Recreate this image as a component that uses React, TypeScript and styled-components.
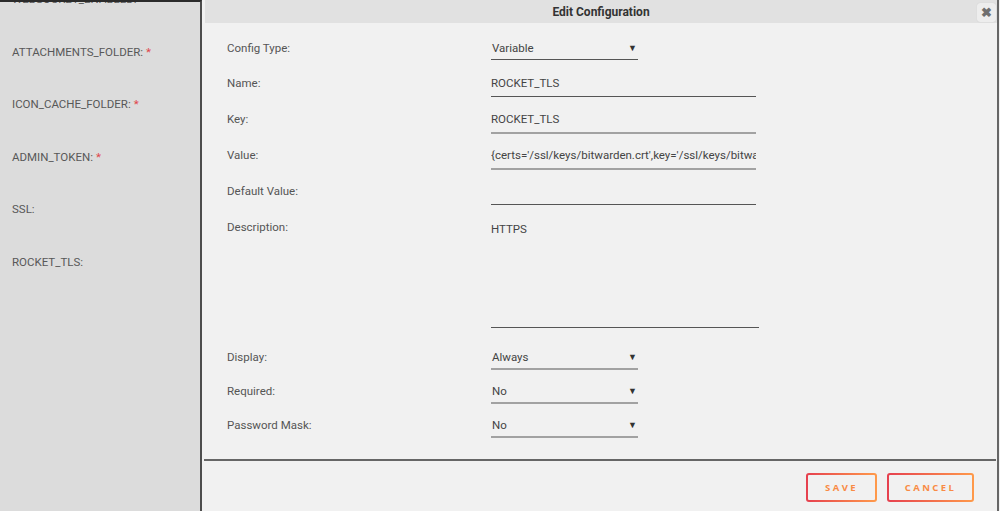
import React from "react";
import styled, { createGlobalStyle } from "styled-components";

const Global = createGlobalStyle`
  html, body { margin: 0; padding: 0; background: #f1f1f1; overflow: hidden; }
  body { font-family: Roboto, "Noto Sans", sans-serif; }
  * { box-sizing: border-box; }
`;

const Page = styled.div`
  display: flex;
  width: 1000px;
  height: 511px;
  overflow: hidden;
`;

const Sidebar = styled.div`
  width: 202px;
  flex: none;
  background: #dcdcdc;
  border-top: 2px solid #2b2b2b;
  border-right: 2px solid #4d4d4d;
  overflow: hidden;
`;

const SideList = styled.div`
  margin-top: -29px;
  padding-left: 12px;
`;

const SideItem = styled.div`
  height: 52.5px;
  display: flex;
  align-items: center;
  font-size: 11.5px;
  color: #585858;
`;

const Star = styled.span`
  color: #e0454b;
  margin-left: 3px;
`;

const Dialog = styled.div`
  flex: 1;
  display: flex;
  flex-direction: column;
  background: #f1f1f1;
  padding-left: 1px;
  border-right: 2px solid #666;
  margin-right: 1px;
`;

const Header = styled.div`
  height: 23px;
  background: #e1e1e1;
  margin: 0 0 0 2px;
  display: flex;
  align-items: center;
  justify-content: center;
  position: relative;
  font-size: 12px;
  font-weight: 700;
  color: #333;
`;

const Close = styled.div`
  position: absolute;
  right: 1px;
  top: 3px;
  width: 19px;
  height: 19px;
  border-radius: 3px;
  background: #ededed;
  box-shadow: 0 0 1px rgba(0, 0, 0, 0.15);
  display: flex;
  align-items: center;
  justify-content: center;
  color: #6f6f6f;
  font-size: 13px;
  font-weight: 700;
`;

const Body = styled.div`
  height: 436px;
  padding: 16px 0 0 24px;
  display: flex;
  flex-direction: column;
`;

const Row = styled.div<{ $mt: number }>`
  display: grid;
  grid-template-columns: 264px auto;
  align-items: start;
  margin-top: ${(p) => p.$mt}px;
`;

const Label = styled.div`
  font-size: 11.5px;
  line-height: 18px;
  color: #555;
`;

const Field = styled.div<{ $w: number; $line: string }>`
  width: ${(p) => p.$w}px;
  font-size: 11.5px;
  line-height: 18px;
  color: #444;
  padding-bottom: 4px;
  border-bottom: ${(p) => p.$line};
  white-space: nowrap;
  overflow: hidden;
`;

const Area = styled(Field)<{ $h: number }>`
  height: ${(p) => p.$h}px;
  padding-top: 2px;
`;

const Select = styled.div<{ $line: string }>`
  width: 147px;
  display: flex;
  align-items: center;
  justify-content: space-between;
  font-size: 11.5px;
  line-height: 18px;
  color: #444;
  padding: 0 0 2px 1px;
  border-bottom: ${(p) => p.$line};
`;

const Arrow = styled.span`
  font-size: 9px;
  color: #333;
  margin-right: 1px;
`;

const Footer = styled.div`
  border-top: 2px solid #666;
  margin-left: 1px;
  margin-right: 1px;
  display: flex;
  justify-content: flex-end;
  gap: 10px;
  padding: 12px 22px 0 0;
`;

const Button = styled.div<{ $w: number }>`
  width: ${(p) => p.$w}px;
  height: 29px;
  border-radius: 3px;
  border: 2px solid transparent;
  background: linear-gradient(#f1f1f1, #f1f1f1) padding-box,
    linear-gradient(90deg, #e6404f, #ff9a4a) border-box;
  display: flex;
  align-items: center;
  justify-content: center;
  font-family: "Open Sans", sans-serif;
  font-size: 9.5px;
  font-weight: 700;
  letter-spacing: 2.4px;
  color: #f98b45;
`;

const DARK = "1px solid #555";
const LIGHT = "2px solid #a2a2a2";

export default function App() {
  const side: [string, boolean][] = [
    ["WEBSOCKET_ENABLED:", false],
    ["ATTACHMENTS_FOLDER:", true],
    ["ICON_CACHE_FOLDER:", true],
    ["ADMIN_TOKEN:", true],
    ["SSL:", false],
    ["ROCKET_TLS:", false],
  ];
  return (
    <>
      <Global />
      <Page>
        <Sidebar>
          <SideList>
            {side.map(([t, req]) => (
              <SideItem key={t}>
                {t}
                {req && <Star>*</Star>}
              </SideItem>
            ))}
          </SideList>
        </Sidebar>
        <Dialog>
          <Header>
            Edit Configuration
            <Close>✖</Close>
          </Header>
          <Body>
            <Row $mt={0}>
              <Label>Config Type:</Label>
              <Select $line={DARK}>
                Variable<Arrow>▼</Arrow>
              </Select>
            </Row>
            <Row $mt={14}>
              <Label>Name:</Label>
              <Field $w={265} $line={DARK}>ROCKET_TLS</Field>
            </Row>
            <Row $mt={13}>
              <Label>Key:</Label>
              <Field $w={265} $line={LIGHT}>ROCKET_TLS</Field>
            </Row>
            <Row $mt={12}>
              <Label>Value:</Label>
              <Field $w={265} $line={LIGHT}>
                {"{certs='/ssl/keys/bitwarden.crt',key='/ssl/keys/bitwarden.key'}"}
              </Field>
            </Row>
            <Row $mt={12}>
              <Label>Default Value:</Label>
              <Field $w={265} $line={DARK}>&nbsp;</Field>
            </Row>
            <Row $mt={13}>
              <Label>Description:</Label>
              <Area $w={268} $h={110} $line={DARK}>HTTPS</Area>
            </Row>
            <Row $mt={20}>
              <Label>Display:</Label>
              <Select $line={LIGHT}>
                Always<Arrow>▼</Arrow>
              </Select>
            </Row>
            <Row $mt={12}>
              <Label>Required:</Label>
              <Select $line={LIGHT}>
                No<Arrow>▼</Arrow>
              </Select>
            </Row>
            <Row $mt={12}>
              <Label>Password Mask:</Label>
              <Select $line={LIGHT}>
                No<Arrow>▼</Arrow>
              </Select>
            </Row>
          </Body>
          <Footer>
            <Button $w={71}>SAVE</Button>
            <Button $w={87}>CANCEL</Button>
          </Footer>
        </Dialog>
      </Page>
    </>
  );
}
